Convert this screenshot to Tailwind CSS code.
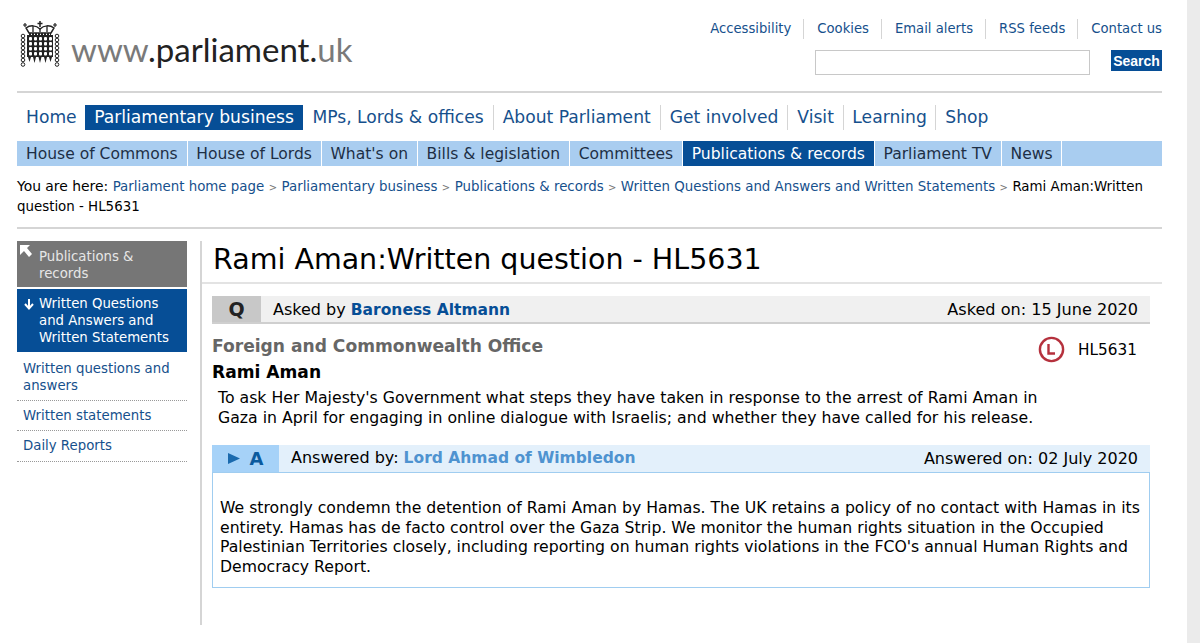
<!DOCTYPE html>
<html lang="en">
<head>
  <meta charset="UTF-8">
  <title>Rami Aman:Written question - HL5631</title>
  <script src="https://cdn.jsdelivr.net/npm/@tailwindcss/browser@4"></script>
</head>
<body class="bg-white text-black font-['DejaVu_Sans',sans-serif] overflow-hidden">
<div class="h-[643px] flex">
  <div class="w-[1187px] pl-[17px] pr-[25px]">

    <!-- Header -->
    <header class="h-[93px] border-b-2 border-[#d5d5d5] flex justify-between">
      <div class="flex items-start pl-[3px] pt-[21px]">
        <!-- portcullis -->
        <svg width="40" height="47" viewBox="0 0 40 47" class="shrink-0" fill="none" stroke="#222">
          <path d="M20 0V6M17.5 2.5H22.5" stroke-width="1.5"/>
          <path d="M5 2V6M3 4H7M35 2V6M33 4H37" stroke-width="1.2"/>
          <path d="M6 7C10 4 16 4 20 8C24 4 30 4 34 7L31 12H9Z" stroke-width="1.5" fill="#fff"/>
          <path d="M13 5V11M27 5V11M20 8V11" stroke-width="1.3"/>
          <path d="M9 13H31" stroke-width="1.8" stroke-dasharray="2 1"/>
          <rect x="7" y="14" width="26" height="22" fill="#222" stroke="none"/>
          <g fill="#fff" stroke="none">
            <rect x="9" y="16" width="3" height="3.4" rx="1"/><rect x="14" y="16" width="3" height="3.4" rx="1"/><rect x="19" y="16" width="3" height="3.4" rx="1"/><rect x="24" y="16" width="3" height="3.4" rx="1"/><rect x="29" y="16" width="3" height="3.4" rx="1"/>
            <rect x="9" y="21" width="3" height="3.4" rx="1"/><rect x="14" y="21" width="3" height="3.4" rx="1"/><rect x="19" y="21" width="3" height="3.4" rx="1"/><rect x="24" y="21" width="3" height="3.4" rx="1"/><rect x="29" y="21" width="3" height="3.4" rx="1"/>
            <rect x="9" y="26" width="3" height="3.4" rx="1"/><rect x="14" y="26" width="3" height="3.4" rx="1"/><rect x="19" y="26" width="3" height="3.4" rx="1"/><rect x="24" y="26" width="3" height="3.4" rx="1"/><rect x="29" y="26" width="3" height="3.4" rx="1"/>
            <rect x="9" y="31" width="3" height="3.4" rx="1"/><rect x="14" y="31" width="3" height="3.4" rx="1"/><rect x="19" y="31" width="3" height="3.4" rx="1"/><rect x="24" y="31" width="3" height="3.4" rx="1"/><rect x="29" y="31" width="3" height="3.4" rx="1"/>
          </g>
          <path d="M8 36L9.5 41L11 36ZM13 36L14.5 42L16 36ZM18.5 36L20 42L21.5 36ZM24 36L25.5 42L27 36ZM29 36L30.5 41L32 36Z" fill="#222" stroke="none"/>
          <g stroke-width="1">
            <circle cx="3" cy="15" r="1.8"/><circle cx="3" cy="19" r="1.8"/><circle cx="3" cy="23" r="1.8"/><circle cx="3" cy="27" r="1.8"/><circle cx="3" cy="31" r="1.8"/><circle cx="3" cy="35" r="1.8"/><circle cx="3" cy="39" r="1.8"/><circle cx="3" cy="43.5" r="1.8"/>
            <circle cx="37" cy="15" r="1.8"/><circle cx="37" cy="19" r="1.8"/><circle cx="37" cy="23" r="1.8"/><circle cx="37" cy="27" r="1.8"/><circle cx="37" cy="31" r="1.8"/><circle cx="37" cy="35" r="1.8"/><circle cx="37" cy="39" r="1.8"/><circle cx="37" cy="43.5" r="1.8"/>
          </g>
        </svg>
        <div class="ml-[11px] mt-[8px] font-['Lato',sans-serif] text-[33px] leading-[40px] text-[#7a7a7a] whitespace-nowrap">www<span class="text-[#222]">.parliament.</span>uk</div>
      </div>
      <div class="flex flex-col items-end pt-[19px]">
        <ul class="flex text-[13.2px] leading-[20px] text-[#16508c]">
          <li class="pr-[12px] border-r border-[#d5d5d5]"><a href="#">Accessibility</a></li>
          <li class="pl-[13px] pr-[12px] border-r border-[#d5d5d5]"><a href="#">Cookies</a></li>
          <li class="pl-[13px] pr-[12px] border-r border-[#d5d5d5]"><a href="#">Email alerts</a></li>
          <li class="pl-[13px] pr-[12px] border-r border-[#d5d5d5]"><a href="#">RSS feeds</a></li>
          <li class="pl-[13px]"><a href="#">Contact us</a></li>
        </ul>
        <form class="flex items-start mt-[11px]">
          <input type="text" class="w-[275px] h-[25px] border border-[#c8c8c8] bg-white">
          <button type="button" class="ml-[21px] h-[21px] w-[51px] bg-[#064e96] text-white text-[14px] font-bold leading-[20px] font-['Liberation_Sans',sans-serif]">Search</button>
        </form>
      </div>
    </header>

    <!-- Main nav -->
    <nav class="mt-[12px] flex text-[17.15px] leading-[25px] h-[25px] text-[#16508c] whitespace-nowrap">
      <a href="#" class="pl-[9px] pr-[8.5px]">Home</a>
      <a href="#" class="pl-[9px] pr-[9.5px] bg-[#064e96] text-white">Parliamentary business</a>
      <a href="#" class="px-[9px] border-r border-[#d5d5d5]">MPs, Lords &amp; offices</a>
      <a href="#" class="px-[9px] border-r border-[#d5d5d5]">About Parliament</a>
      <a href="#" class="px-[9px] border-r border-[#d5d5d5]">Get involved</a>
      <a href="#" class="px-[9px] border-r border-[#d5d5d5]">Visit</a>
      <a href="#" class="px-[8.5px] border-r border-[#d5d5d5]">Learning</a>
      <a href="#" class="px-[9px]">Shop</a>
    </nav>

    <!-- Sub nav -->
    <nav class="mt-[11px] flex gap-[1px] h-[25px] text-[15.55px] leading-[27px] text-[#1d2f45] whitespace-nowrap">
      <a href="#" class="pl-[9px] pr-[8.8px] bg-[#a9cdf0]">House of Commons</a>
      <a href="#" class="px-[8.8px] bg-[#a9cdf0]">House of Lords</a>
      <a href="#" class="px-[8.8px] bg-[#a9cdf0]">What's on</a>
      <a href="#" class="px-[8.8px] bg-[#a9cdf0]">Bills &amp; legislation</a>
      <a href="#" class="px-[8.8px] bg-[#a9cdf0]">Committees</a>
      <a href="#" class="px-[8.8px] bg-[#064e96] text-white">Publications &amp; records</a>
      <a href="#" class="px-[8.8px] bg-[#a9cdf0]">Parliament TV</a>
      <a href="#" class="px-[8.8px] bg-[#a9cdf0]">News</a>
      <span class="flex-1 bg-[#a9cdf0]"></span>
    </nav>

    <!-- Breadcrumb -->
    <p class="mt-[10px] pb-[11px] text-[13.9px] leading-[20px] border-b-2 border-[#d5d5d5]">
      You are here: <a href="#" class="text-[13.38px] leading-none text-[#16508c]">Parliament home page</a>
      <span class="text-[#777] text-[10px] leading-none">&gt;</span> <a href="#" class="text-[13.38px] leading-none text-[#16508c]">Parliamentary business</a>
      <span class="text-[#777] text-[10px] leading-none">&gt;</span> <a href="#" class="text-[13.38px] leading-none text-[#16508c]">Publications &amp; records</a>
      <span class="text-[#777] text-[10px] leading-none">&gt;</span> <a href="#" class="text-[13.38px] leading-none text-[#16508c]">Written Questions and Answers and Written Statements</a>
      <span class="text-[#777] text-[10px] leading-none">&gt;</span> <span class="text-[13.38px] leading-none">Rami Aman:Written</span> <span class="text-[13.38px] leading-none">question - HL5631</span>
    </p>

    <div class="mt-[12px] flex">
      <!-- Sidebar -->
      <aside class="w-[170px] text-[13.3px] leading-[17px] shrink-0">
        <div class="relative h-[46px] bg-[#767676] text-[#e6e6e6] pl-[22px] pt-[7px]">
          <svg class="absolute left-[3px] top-[4px]" width="12" height="12" viewBox="0 0 12 12" fill="#fff"><path d="M0 0H10L7 3L12 9L9 12L4 6L0 10Z"/></svg>
          Publications &amp; records
        </div>
        <div class="relative mt-[2px] h-[63px] bg-[#064e96] text-white pl-[22px] pt-[6px]">
          <svg class="absolute left-[7px] top-[10px]" width="10" height="11" viewBox="0 0 10 11" fill="none" stroke="#fff" stroke-width="2"><path d="M5 0V9M1 5L5 9.5L9 5"/></svg>
          Written Questions and Answers and Written Statements
        </div>
        <ul class="text-[#16508c]">
          <li class="px-[6px] pt-[8px] pb-[6px] border-b border-dotted border-[#999]"><a href="#">Written questions and answers</a></li>
          <li class="px-[6px] pt-[6px] pb-[6px] border-b border-dotted border-[#999]"><a href="#">Written statements</a></li>
          <li class="px-[6px] pt-[6px] pb-[7px] border-b border-dotted border-[#999]"><a href="#">Daily Reports</a></li>
        </ul>
      </aside>

      <!-- Content -->
      <main class="ml-[13px] flex-1 h-[384px] border-l-2 border-[#d5d5d5]">
        <h1 class="h-[43px] pl-[11px] text-[28.5px] leading-[37px] border-b-2 border-[#e3e3e3]">Rami Aman:Written question - HL5631</h1>
        <div class="ml-[10px] mr-[12px]">
          <div class="mt-[12px] h-[28px] flex items-center bg-[#f0f0f0] border-b-2 border-[#cfcfcf] text-[16px]">
            <span class="w-[49px] h-full bg-[#c8c8c8] text-center font-bold text-[19px] leading-[26px] text-[#222]">Q</span>
            <span class="ml-[12px] pt-[2px]">Asked by <a href="#" class="font-bold text-[15.5px] text-[#064e96]">Baroness Altmann</a></span>
            <span class="ml-auto mr-[12px] pt-[2px] text-[16.1px]">Asked on: 15 June 2020</span>
          </div>
          <div class="flex justify-between mt-[10px]">
            <h2 class="text-[17.1px] leading-[24px] font-bold text-[#666]">Foreign and Commonwealth Office</h2>
            <div class="flex items-center mr-[13px] mt-[2px] text-[15.3px] leading-[24px]">
              <svg width="27" height="27" viewBox="0 0 27 27" fill="none" stroke="#b5313d" stroke-width="2.4"><circle cx="13.5" cy="13.5" r="11.6"/><path d="M10.5 8V17.5H17"/></svg>
              <span class="ml-[13px]">HL5631</span>
            </div>
          </div>
          <h3 class="text-[17.1px] leading-[22px] font-bold -mt-[2px]">Rami Aman</h3>
          <p class="mt-[5px] pl-[6px] pr-[80px] text-[15.72px] leading-[20px]">To ask Her Majesty's Government what steps they have taken in response to the arrest of Rami Aman in Gaza in April for engaging in online dialogue with Israelis; and whether they have called for his release.</p>
          <div class="mt-[17px] h-[27px] flex items-center bg-[#e3f0fb] text-[16px]">
            <span class="w-[67px] h-full bg-[#a6d2f8] flex items-center justify-center font-bold text-[18px] text-[#0a5a9e]">
              <svg class="mr-[10px]" width="12" height="11" viewBox="0 0 12 11" fill="#1a6aae"><path d="M0 0L12 5.5L0 11Z"/></svg>A
            </span>
            <span class="ml-[12px]">Answered by: <a href="#" class="font-bold text-[15.5px] text-[#4f93d0]">Lord Ahmad of Wimbledon</a></span>
            <span class="ml-auto mr-[12px]">Answered on: 02 July 2020</span>
          </div>
          <div class="h-[116px] border border-[#a0cdf0] pl-[7px] pr-[3px] pt-[25px] text-[15.68px] leading-[19.7px]">We strongly condemn the detention of Rami Aman by Hamas. The UK retains a policy of no contact with Hamas in its entirety. Hamas has de facto control over the Gaza Strip. We monitor the human rights situation in the Occupied Palestinian Territories closely, including reporting on human rights violations in the FCO's annual Human Rights and Democracy Report.</div>
        </div>
      </main>
    </div>
  </div>
  <div class="w-[13px] bg-[#ebebeb]"></div>
</div>
</body>
</html>
